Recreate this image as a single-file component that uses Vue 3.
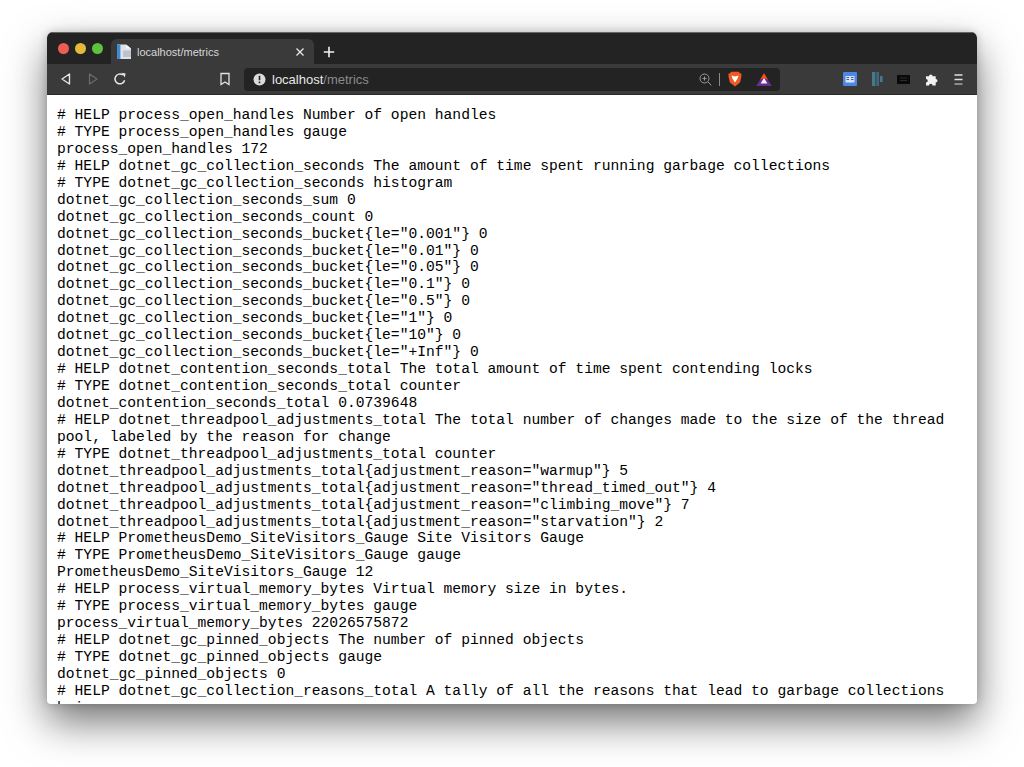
<script setup>
const text = `# HELP process_open_handles Number of open handles
# TYPE process_open_handles gauge
process_open_handles 172
# HELP dotnet_gc_collection_seconds The amount of time spent running garbage collections
# TYPE dotnet_gc_collection_seconds histogram
dotnet_gc_collection_seconds_sum 0
dotnet_gc_collection_seconds_count 0
dotnet_gc_collection_seconds_bucket{le="0.001"} 0
dotnet_gc_collection_seconds_bucket{le="0.01"} 0
dotnet_gc_collection_seconds_bucket{le="0.05"} 0
dotnet_gc_collection_seconds_bucket{le="0.1"} 0
dotnet_gc_collection_seconds_bucket{le="0.5"} 0
dotnet_gc_collection_seconds_bucket{le="1"} 0
dotnet_gc_collection_seconds_bucket{le="10"} 0
dotnet_gc_collection_seconds_bucket{le="+Inf"} 0
# HELP dotnet_contention_seconds_total The total amount of time spent contending locks
# TYPE dotnet_contention_seconds_total counter
dotnet_contention_seconds_total 0.0739648
# HELP dotnet_threadpool_adjustments_total The total number of changes made to the size of the thread pool, labeled by the reason for change
# TYPE dotnet_threadpool_adjustments_total counter
dotnet_threadpool_adjustments_total{adjustment_reason="warmup"} 5
dotnet_threadpool_adjustments_total{adjustment_reason="thread_timed_out"} 4
dotnet_threadpool_adjustments_total{adjustment_reason="climbing_move"} 7
dotnet_threadpool_adjustments_total{adjustment_reason="starvation"} 2
# HELP PrometheusDemo_SiteVisitors_Gauge Site Visitors Gauge
# TYPE PrometheusDemo_SiteVisitors_Gauge gauge
PrometheusDemo_SiteVisitors_Gauge 12
# HELP process_virtual_memory_bytes Virtual memory size in bytes.
# TYPE process_virtual_memory_bytes gauge
process_virtual_memory_bytes 22026575872
# HELP dotnet_gc_pinned_objects The number of pinned objects
# TYPE dotnet_gc_pinned_objects gauge
dotnet_gc_pinned_objects 0
# HELP dotnet_gc_collection_reasons_total A tally of all the reasons that lead to garbage collections being run`
</script>

<template>
  <div class="page">
    <div class="window">
      <div class="tabbar">
        <div class="lights">
          <span class="light red"></span>
          <span class="light yellow"></span>
          <span class="light green"></span>
        </div>
        <div class="tab">
          <svg class="favicon" width="14" height="15" viewBox="0 0 14 15">
            <path d="M0 .5h9l5 4V15H0z" fill="#dfe3e9" />
            <path d="M0 .5h3.4V15H0z" fill="#3f8bd0" />
            <path d="M6 6.5h8V13H6z" fill="#bcc3cc" />
            <path d="M9 .5l5 4H9z" fill="#f6f7f8" />
          </svg>
          <span class="tab-title">localhost/metrics</span>
          <svg class="tab-close" width="10" height="10" viewBox="0 0 10 10">
            <path d="M1.5 1.5l7 7M8.5 1.5l-7 7" stroke="#e8e8e8" stroke-width="1.3" />
          </svg>
        </div>
        <svg class="new-tab" width="12" height="12" viewBox="0 0 12 12">
          <path d="M6 .8v10.4M.8 6h10.4" stroke="#f2f2f2" stroke-width="1.6" />
        </svg>
      </div>
      <div class="toolbar">
        <div class="nav">
          <svg width="12" height="14" viewBox="0 0 12 14"><path d="M9.5 2v10L2 7z" fill="none" stroke="#e6e6e6" stroke-width="1.4" stroke-linejoin="round" /></svg>
          <svg width="12" height="14" viewBox="0 0 12 14"><path d="M2.5 2v10L10 7z" fill="none" stroke="#6a6a6a" stroke-width="1.3" stroke-linejoin="round" /></svg>
          <svg width="14" height="14" viewBox="0 0 14 14"><path d="M11.6 8.2A4.9 4.9 0 1 1 9.8 3" fill="none" stroke="#e6e6e6" stroke-width="1.5" /><path d="M8.6 .8l4 .6-.8 4z" fill="#e6e6e6" /></svg>
        </div>
        <svg class="bookmark" width="12" height="14" viewBox="0 0 12 14"><path d="M2 1.5h8v11L6 10l-4 2.5z" fill="none" stroke="#e2e2e2" stroke-width="1.3" /></svg>
        <div class="omnibox">
          <svg class="info" width="13" height="13" viewBox="0 0 13 13">
            <circle cx="6.5" cy="6.5" r="6" fill="#dcdcdc" />
            <path d="M6.5 2.8v4.4M6.5 8.6v1.6" stroke="#222" stroke-width="1.6" />
          </svg>
          <span class="url"><span class="host">localhost</span><span class="path">/metrics</span></span>
          <svg class="zoom-icon" width="13" height="13" viewBox="0 0 13 13">
            <circle cx="5.5" cy="5.5" r="4.5" fill="none" stroke="#9a9a9a" stroke-width="1" />
            <path d="M9 9l3.4 3.4M3.5 5.5h4M5.5 3.5v4" stroke="#9a9a9a" stroke-width="1" />
          </svg>
          <span class="divider"></span>
          <svg class="brave" width="14" height="16" viewBox="0 0 14 16">
            <path d="M3.2.8h7.6l1.2 1.5 1.5.4-.2 3.6-1.3 5.1L7 15.4 1.9 11.4.6 6.3.4 2.7l1.6-.4z" fill="#ee5a26" />
            <path d="M3.5 4.6L7 5.6l3.5-1-.9 3L7 11.5 4.4 7.6z" fill="#fff" />
          </svg>
          <svg class="bat" width="16" height="13" viewBox="0 0 16 13">
            <path d="M8 .3L15.8 13H.2z" fill="#662d91" />
            <path d="M8 .3L12 6.8 9.5 5.5h-3L4 6.8z" fill="#ff5000" />
            <path d="M8 5l3.4 5.5H4.6z" fill="#f2f2f2" />
          </svg>
        </div>
        <div class="extensions">
          <svg width="14" height="14" viewBox="0 0 14 14">
            <rect width="14" height="14" rx="1" fill="#4d86e6" />
            <path d="M2.5 4h4l.5.6.5-.6h4v6.5h-4L7 11l-.5-.5h-4z" fill="#d8e4f6" />
            <path d="M3.5 5.5h2.5M8 5.5h2.5M3.5 7.5h2.5M8 7.5h2.5" stroke="#41618f" stroke-width="1" />
          </svg>
          <svg width="11" height="14" viewBox="0 0 11 14">
            <rect x="0" y="0" width="3.4" height="14" fill="#47788c" />
            <rect x="4.4" y="0" width="2.6" height="14" fill="#3d6a7c" />
            <rect x="8" y="4" width="2.6" height="6" fill="#47788c" />
          </svg>
          <svg width="13" height="9" viewBox="0 0 13 9">
            <rect width="13" height="9" fill="#0a0a0a" />
            <path d="M3 3h7M3 5.5h7" stroke="#2c2c2c" stroke-width="1" />
          </svg>
          <svg width="13" height="13" viewBox="0 0 13 13">
            <path d="M1 3.2h3a1.8 1.8 0 1 1 3.6 0h3.1V6a1.8 1.8 0 1 1 0 3.6v3H7.6a1.8 1.8 0 1 0-3.6 0H1V9.6A1.8 1.8 0 1 0 1 6z" fill="#f2f2f2" />
          </svg>
          <svg class="menu" width="9" height="11" viewBox="0 0 9 11">
            <path d="M.5 1h8M.5 5.5h8" stroke="#e0e0e0" stroke-width="1.6" />
            <path d="M.5 10h8" stroke="#a8a8a8" stroke-width="1.6" />
          </svg>
        </div>
      </div>
      <pre class="content">{{ text }}</pre>
    </div>
  </div>
</template>

<style>
html, body { margin: 0; background: #fff; }
</style>

<style scoped>
.page {
  height: 767px;
  box-sizing: border-box;
  padding: 32px 47px 0;
  overflow: hidden;
  background: #fff;
}
.window {
  width: 930px;
  height: 672px;
  border-radius: 6px 6px 4px 4px;
  overflow: hidden;
  background: #fff;
  box-shadow: 0 18px 40px rgba(0, 0, 0, 0.55), 0 0 10px rgba(0, 0, 0, 0.18);
  display: flex;
  flex-direction: column;
}
.tabbar {
  height: 32px;
  flex: none;
  background: #232323;
  border-top: 1px solid #666;
  box-sizing: border-box;
  display: flex;
  align-items: flex-end;
}
.lights {
  display: flex;
  gap: 6px;
  margin-left: 11px;
  align-self: flex-start;
  margin-top: 10px;
}
.light { width: 11px; height: 11px; border-radius: 50%; }
.red { background: #ed5c55; }
.yellow { background: #e4b93b; }
.green { background: #5fc23e; }
.tab {
  width: 203px;
  height: 25px;
  margin-left: 8px;
  background: #3a3a3a;
  border-radius: 6px 6px 0 0;
  display: flex;
  align-items: center;
  box-sizing: border-box;
  padding: 0 9px 0 6px;
}
.favicon { flex: none; }
.tab-title {
  margin-left: 6px;
  font-size: 11px;
  color: #d8d8d8;
  font-family: "Liberation Sans", sans-serif;
  flex: 1;
}
.new-tab { margin: 0 0 6px 9px; }
.toolbar {
  height: 30px;
  flex: none;
  background: #3a3a3a;
  border-bottom: 1px solid #2a2a2a;
  display: flex;
  align-items: center;
}
.nav {
  display: flex;
  align-items: center;
  gap: 14.5px;
  margin-left: 13px;
}
.bookmark { margin-left: 92px; }
.omnibox {
  width: 536px;
  height: 23px;
  margin-left: 13px;
  background: #232323;
  border-radius: 4px;
  display: flex;
  align-items: center;
  padding: 0 8px 0 9px;
  box-sizing: border-box;
}
.url {
  flex: 1;
  margin-left: 6px;
  font-family: "Liberation Sans", sans-serif;
  font-size: 13px;
}
.host { color: #e8e8e8; }
.path { color: #8b8b8b; }
.zoom-icon { flex: none; }
.divider { width: 1px; height: 13px; background: #8a8a8a; margin: 0 8px 0 7px; }
.bat { margin-left: 14px; }
.extensions {
  display: flex;
  align-items: center;
  gap: 14.5px;
  margin-left: 63px;
}
.menu { margin-left: 1.5px; }
.content {
  margin: 0;
  padding: 12px 10px 0;
  flex: 1;
  min-height: 0;
  overflow: hidden;
  font-family: "Liberation Mono", monospace;
  font-size: 14.655px;
  line-height: 16.94px;
  color: #000;
  white-space: pre-wrap;
  word-break: normal;
}
</style>
